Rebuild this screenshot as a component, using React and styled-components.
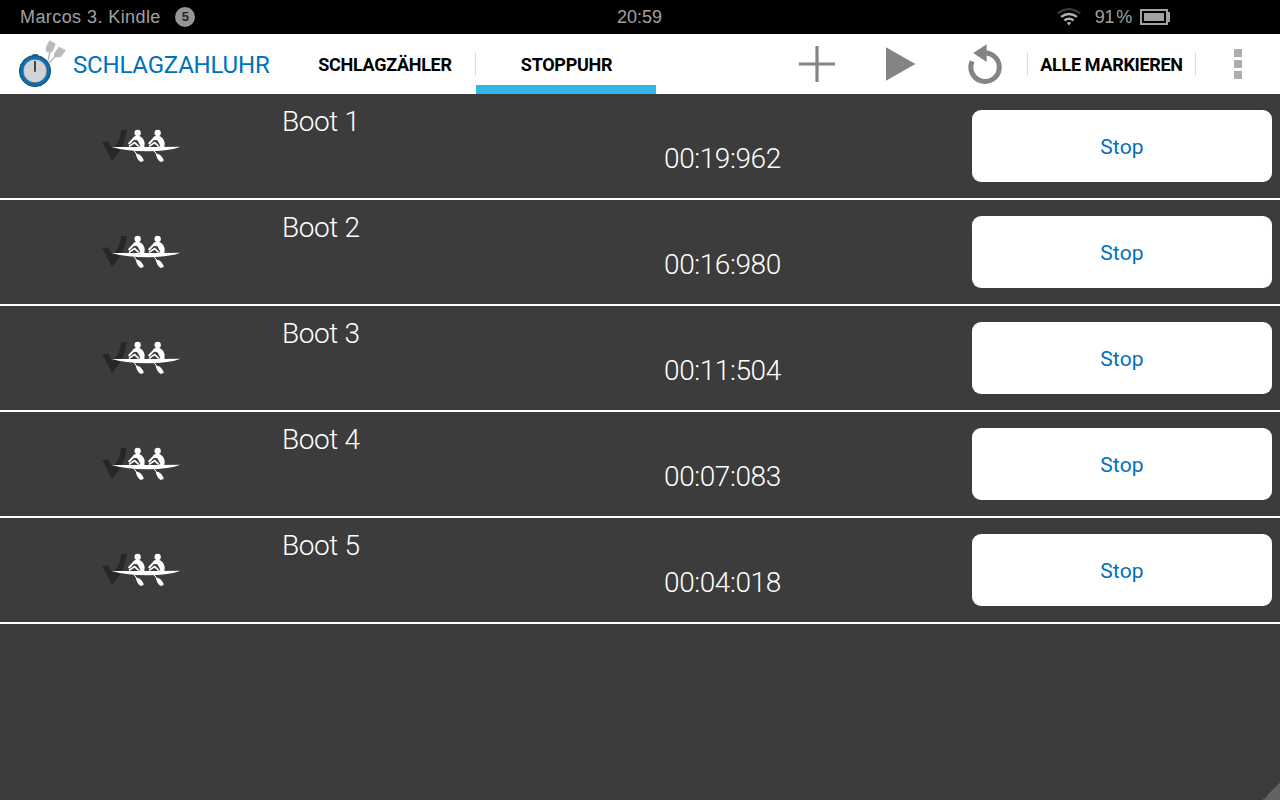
import React from 'react'
import styled, { createGlobalStyle } from 'styled-components';

const GlobalStyle = createGlobalStyle`
body{
    margin:0;
    background-color:#3c3c3c;
    font-family:Roboto, sans-serif;
}
`;

const Screen = styled.div`
position:relative;
display:flex;
flex-direction:column;
width:1280px;
height:800px;
overflow:hidden;
background-color:#3c3c3c;
`;

const StatusBar = styled.div`
display:grid;
grid-template-columns:597px auto 1fr;
align-items:center;
height:34px;
box-sizing:border-box;
padding:0 110px 0 20px;
background-color:black;
color:#a0a0a0;
font-family:"Liberation Sans", sans-serif;
font-size:18px;
line-height:34px;
`;

const Device = styled.div`
display:flex;
align-items:center;
letter-spacing:0.42px;
`;

const Count = styled.span`
width:20px;
height:20px;
margin-left:14.5px;
border-radius:50%;
background-color:#969696;
color:#262626;
font-size:13px;
font-weight:bold;
line-height:20px;
letter-spacing:0;
text-align:center;
`;

const Clock = styled.div`
white-space:nowrap;
`;

const Indicators = styled.div`
display:flex;
align-items:center;
justify-content:flex-end;
`;

const Percent = styled.span`
margin:0 8px 0 14px;
word-spacing:-3px;
letter-spacing:-0.2px;
`;

const ActionBar = styled.div`
display:flex;
align-items:stretch;
height:60px;
background-color:white;
`;

const Brand = styled.div`
display:flex;
width:294px;
color:#0071bc;
font-size:24px;
line-height:62px;
letter-spacing:-0.2px;
`;

const LogoBox = styled.div`
width:73px;
height:60px;
`;

const Tab = styled.div`
width:${props => props.width}px;
box-sizing:border-box;
padding-left:1px;
color:black;
font-size:18px;
font-weight:bold;
line-height:62px;
letter-spacing:-0.3px;
text-align:center;
box-shadow:${props => props.active ? 'inset 0 -9px #33b5e5' : 'none'};
`;

const Divider = styled.div`
width:1px;
height:24px;
margin-top:18px;
background-color:#dcdcdc;
`;

const Tools = styled.div`
width:251px;
height:60px;
margin-left:120px;
`;

const MarkAll = styled.div`
width:167px;
color:black;
font-size:18px;
font-weight:bold;
line-height:62px;
letter-spacing:-0.32px;
text-align:center;
`;

const Overflow = styled.div`
display:flex;
flex:1;
flex-direction:column;
align-items:center;
gap:3px;
padding-top:15px;
`;

const Dot = styled.span`
width:8px;
height:8px;
background-color:#adadad;
`;

const Row = styled.div`
display:grid;
grid-template-columns:282px 382px 308px 300px;
height:104px;
border-bottom:2px solid white;
color:white;
`;

const BoatBox = styled.div`
padding:21px 0 0 95px;
`;

const Name = styled.div`
padding-top:11px;
font-size:28px;
font-weight:300;
line-height:33px;
letter-spacing:-0.4px;
`;

const Time = styled.div`
padding-top:48px;
font-size:28px;
font-weight:300;
line-height:33px;
letter-spacing:-0.4px;
`;

const StopButton = styled.button`
height:72px;
margin-top:16px;
padding:2px 0 0;
border:none;
border-radius:9px;
background-color:white;
color:#0071bc;
font-family:Roboto, sans-serif;
font-size:21px;
letter-spacing:0.2px;
`;

const Corner = styled.div`
position:absolute;
right:0;
bottom:0;
width:17px;
height:17px;
background:linear-gradient(135deg, transparent 50%, #636363 50%);
`;

const Logo = () => (
    <svg width="73" height="60" viewBox="0 34 73 60">
        <g fill="#bababa">
            <path d="M49.3 40.3L55.7 43.7L53 51L50.6 53L48.3 62H47L49 52.5L46 51.6L45.7 47.7Z" />
            <path d="M59 46.7L66 50.3L60.7 57L55.2 57.6L49.5 63.5L48.3 62.5L54.2 56.4L53.7 53.8Z" />
        </g>
        <path d="M32.5 54H38V57H32.5Z" fill="#6b6e73" />
        <circle cx="35" cy="71" r="15.6" fill="#0071bc" stroke="#334453" strokeWidth="1" />
        <circle cx="35" cy="71" r="11.8" fill="#d1d3d6" stroke="#56616b" strokeWidth="0.7" />
        <path d="M35 61V71.7" stroke="#222" strokeWidth="1.6" />
    </svg>
)

const ToolIcons = () => (
    <svg width="251" height="60" viewBox="776 34 251 60">
        <path d="M799 64H835M817 46V82" stroke="#848484" strokeWidth="3.2" />
        <path d="M886 47.3V80.7L915.4 64Z" fill="#848484" />
        <path d="M972.2 61.3A14.2 14.2 0 1 0 985 53.1" fill="none" stroke="#848484" strokeWidth="5" />
        <path d="M973.2 53L986.7 44.3V62Z" fill="#848484" />
    </svg>
)

const Wifi = () => (
    <svg width="24" height="18" viewBox="0 0 24 18" fill="none" strokeWidth="2.3">
        <path d="M0.8 5.3Q12 -3 23.2 5.3" stroke="#3c3c3c" />
        <path d="M4 8.9Q12 3 20 8.9M7.4 12.5Q12 9 16.6 12.5" stroke="#b0b0b0" />
        <path d="M9.8 14.8Q12 13.3 14.2 14.8L12 17.6Z" fill="#b0b0b0" />
    </svg>
)

const Battery = () => (
    <svg width="30" height="16" viewBox="0 0 30 16">
        <path d="M1 1H27V15H1Z" fill="none" stroke="#a3a3a3" strokeWidth="2" />
        <path d="M4 4H24V12H4ZM28 3H30V13H28Z" fill="#a3a3a3" />
    </svg>
)

const Rower = ({ x }) => (
    <g transform={`translate(${x} 0)`} fill="white">
        <circle cx="128" cy="54" r="9.5" />
        <path d="M115 66Q126 60 135 64Q147 71 149 84L148 98H127L136 92L127 76L116 74Z" />
        <path d="M119 68L101 87" stroke="white" strokeWidth="6" />
        <path d="M102 94L119 83L131 94" fill="none" stroke="white" strokeWidth="5" />
        <path d="M117 107L127 120" stroke="white" strokeWidth="3" />
        <path d="M122 116Q132 115 138 122Q146 131 146 138L137 141Q125 132 122 116Z" />
    </g>
)

const Boat = () => (
    <svg width="95" height="60" viewBox="0 0 285 180">
        <path d="M22 82L40 79L52 103Q75 83 78 45H95Q93 90 51 138Z" fill="#272727" />
        <Rower x={0} />
        <Rower x={60} />
        <path d="M51 96Q155 97 256 95Q225 108 158 109Q85 108 51 96Z" fill="white" />
    </svg>
)

const boats = [
    { name: 'Boot 1', time: '00:19:962' },
    { name: 'Boot 2', time: '00:16:980' },
    { name: 'Boot 3', time: '00:11:504' },
    { name: 'Boot 4', time: '00:07:083' },
    { name: 'Boot 5', time: '00:04:018' },
]

const App = () => {
    return (
        <Screen>
            <GlobalStyle />
            <StatusBar>
                <Device>Marcos 3. Kindle<Count>5</Count></Device>
                <Clock>20:59</Clock>
                <Indicators>
                    <Wifi />
                    <Percent>91 %</Percent>
                    <Battery />
                </Indicators>
            </StatusBar>
            <ActionBar>
                <Brand>
                    <LogoBox><Logo /></LogoBox>
                    SCHLAGZAHLUHR
                </Brand>
                <Tab width={181}>SCHLAGZÄHLER</Tab>
                <Divider />
                <Tab width={180} active>STOPPUHR</Tab>
                <Tools><ToolIcons /></Tools>
                <Divider />
                <MarkAll>ALLE MARKIEREN</MarkAll>
                <Divider />
                <Overflow>
                    <Dot />
                    <Dot />
                    <Dot />
                </Overflow>
            </ActionBar>
            {boats.map(boat => (
                <Row key={boat.name}>
                    <BoatBox><Boat /></BoatBox>
                    <Name>{boat.name}</Name>
                    <Time>{boat.time}</Time>
                    <StopButton>Stop</StopButton>
                </Row>
            ))}
            <Corner />
        </Screen>
    );
};

export default App;
